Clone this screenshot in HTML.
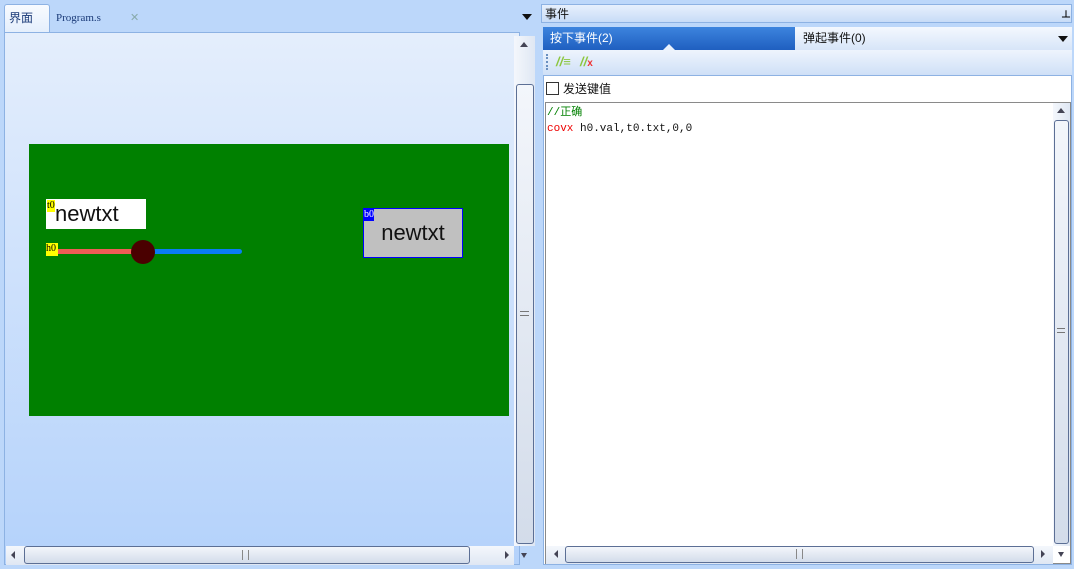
<!DOCTYPE html>
<html><head><meta charset="utf-8"><style>
*{margin:0;padding:0;box-sizing:border-box}
body{width:1074px;height:569px;overflow:hidden;background:#bcd7fa;font-family:"Liberation Sans","Noto Sans CJK SC",sans-serif;font-size:12px;position:relative}
.a{position:absolute}
.sb{background:linear-gradient(90deg,#f4f7fc,#dfe7f3);}
.th{border:1px solid #5c6f95;border-radius:3px;background:linear-gradient(#f3f6fb,#d3dcea)}
</style></head><body>
<!-- left -->
<div class="a" style="left:4px;top:4px;width:46px;height:30px;background:linear-gradient(#f8fbff,#e3eefc);border:1px solid #8db2e3;border-bottom:none;border-radius:3px 3px 0 0"></div>
<div class="a" style="left:9px;top:9px;font-size:12px;color:#1a3a78">界面</div>
<div class="a" style="left:56px;top:12px;font-family:'Liberation Serif',serif;font-size:11px;color:#1a3a78">Program.s</div>
<div class="a" style="left:130px;top:11px;font-size:11px;color:#8aa">✕</div>
<div class="a" style="left:522px;top:14px;width:0;height:0;border-left:5px solid transparent;border-right:5px solid transparent;border-top:6px solid #111"></div>
<div class="a" style="left:4px;top:32px;width:516px;height:533px;border:1px solid #8db2e3;background:linear-gradient(#e4eefc,#b4d2fb)"></div>
<div class="a sb" style="left:514px;top:36px;width:21px;height:510px"></div>
<div class="a" style="left:520px;top:42px;border-left:4px solid transparent;border-right:4px solid transparent;border-bottom:5px solid #445"></div>
<div class="a th" style="left:516px;top:84px;width:18px;height:460px"></div>
<div class="a" style="left:520px;top:311px;width:9px;height:5px;border-top:1px solid #777;border-bottom:1px solid #777"></div>
<div class="a sb" style="left:6px;top:546px;width:508px;height:19px;background:linear-gradient(#f4f7fc,#dfe7f3)"></div>
<div class="a th" style="left:24px;top:546px;width:446px;height:18px"></div>
<div class="a" style="left:242px;top:550px;width:7px;height:10px;border-left:1px solid #888;border-right:1px solid #888"></div>
<div class="a" style="left:11px;top:551px;border-top:4px solid transparent;border-bottom:4px solid transparent;border-right:4px solid #445"></div>
<div class="a" style="left:505px;top:551px;border-top:4px solid transparent;border-bottom:4px solid transparent;border-left:4px solid #445"></div>
<div class="a" style="left:521px;top:553px;border-left:3px solid transparent;border-right:3px solid transparent;border-top:5px solid #445"></div>
<div class="a" style="left:29px;top:144px;width:480px;height:272px;background:#008000"></div>
<div class="a" style="left:46px;top:199px;width:100px;height:30px;background:#fff;font-size:22px;line-height:30px;padding-left:9px;color:#111">newtxt</div>
<div class="a" style="left:47px;top:200px;background:#ff0;font-size:10px;line-height:12px;font-family:'Liberation Serif',serif">t0</div>
<div class="a" style="left:58px;top:249px;width:80px;height:5px;background:#f05c55"></div>
<div class="a" style="left:150px;top:249px;width:92px;height:5px;background:#0a7cf4;border-radius:0 3px 3px 0"></div>
<div class="a" style="left:131px;top:240px;width:24px;height:24px;border-radius:50%;background:#4a0000"></div>
<div class="a" style="left:46px;top:243px;background:#ff0;font-size:10px;line-height:12px;font-family:'Liberation Serif',serif;width:12px;height:13px">h0</div>
<div class="a" style="left:363px;top:208px;width:100px;height:50px;background:#c0c0c0;border:1px solid #00f;font-size:22px;line-height:48px;text-align:center;color:#111">newtxt</div>
<div class="a" style="left:364px;top:209px;background:#00f;color:#fff;font-size:10px;line-height:12px;font-family:'Liberation Serif',serif">b0</div>
<!-- right -->
<div class="a" style="left:541px;top:4px;width:531px;height:19px;border:1px solid #8db2e3;background:linear-gradient(#e7f0fd,#c8dcf7)"></div>
<div class="a" style="left:545px;top:5px;font-size:12px;color:#111">事件</div>
<div class="a" style="left:1061px;top:6px;font-size:10px;font-weight:bold">⊥</div>
<div class="a" style="left:543px;top:27px;width:252px;height:23px;background:linear-gradient(#3d84de,#1f5fc0)"></div>
<div class="a" style="left:550px;top:29px;font-size:12px;color:#fff">按下事件(2)</div>
<div class="a" style="left:663px;top:44px;border-left:6px solid transparent;border-right:6px solid transparent;border-bottom:6px solid #eaf2fd"></div>
<div class="a" style="left:795px;top:27px;width:277px;height:23px;background:linear-gradient(#f4f8fe,#d7e5f8)"></div>
<div class="a" style="left:803px;top:29px;font-size:12px;color:#111">弹起事件(0)</div>
<div class="a" style="left:1058px;top:36px;border-left:5px solid transparent;border-right:5px solid transparent;border-top:6px solid #111"></div>
<div class="a" style="left:543px;top:50px;width:529px;height:25px;background:linear-gradient(#eef4fd,#cfe0f7)"></div>
<div class="a" style="left:546px;top:54px;width:2px;height:16px;border-left:2px dotted #6a8fc0"></div>
<div class="a" style="left:556px;top:54px;font-size:13px;font-weight:bold;font-style:italic;color:#8cc63f">//≡</div>
<div class="a" style="left:580px;top:54px;font-size:13px;font-weight:bold;font-style:italic;color:#8cc63f">//<span style="color:#e33;font-size:10px;font-style:normal">x</span></div>
<div class="a" style="left:543px;top:75px;width:529px;height:490px;background:#fff;border:1px solid #8db2e3"></div>
<div class="a" style="left:546px;top:82px;width:13px;height:13px;border:1px solid #333"></div>
<div class="a" style="left:563px;top:80px;font-size:12px;color:#111">发送键值</div>
<div class="a" style="left:545px;top:102px;width:526px;height:462px;border:1px solid #8a8a8a"></div>
<div class="a" style="left:547px;top:105px;font-family:'Liberation Mono','Noto Sans CJK SC',monospace;font-size:11px;line-height:16px;color:#111"><span style="color:#008000">//正确</span><br><span style="color:#e00">covx</span> h0.val,t0.txt,0,0</div>
<div class="a sb" style="left:1053px;top:103px;width:17px;height:443px"></div>
<div class="a" style="left:1057px;top:108px;border-left:4px solid transparent;border-right:4px solid transparent;border-bottom:5px solid #445"></div>
<div class="a th" style="left:1054px;top:120px;width:15px;height:424px"></div>
<div class="a" style="left:1057px;top:328px;width:8px;height:5px;border-top:1px solid #777;border-bottom:1px solid #777"></div>
<div class="a sb" style="left:546px;top:546px;width:507px;height:18px;background:linear-gradient(#f4f7fc,#dfe7f3)"></div>
<div class="a th" style="left:565px;top:546px;width:469px;height:17px"></div>
<div class="a" style="left:796px;top:549px;width:7px;height:10px;border-left:1px solid #888;border-right:1px solid #888"></div>
<div class="a" style="left:554px;top:550px;border-top:4px solid transparent;border-bottom:4px solid transparent;border-right:4px solid #445"></div>
<div class="a" style="left:1041px;top:550px;border-top:4px solid transparent;border-bottom:4px solid transparent;border-left:4px solid #445"></div>
<div class="a" style="left:1058px;top:552px;border-left:3px solid transparent;border-right:3px solid transparent;border-top:5px solid #445"></div>
</body></html>
